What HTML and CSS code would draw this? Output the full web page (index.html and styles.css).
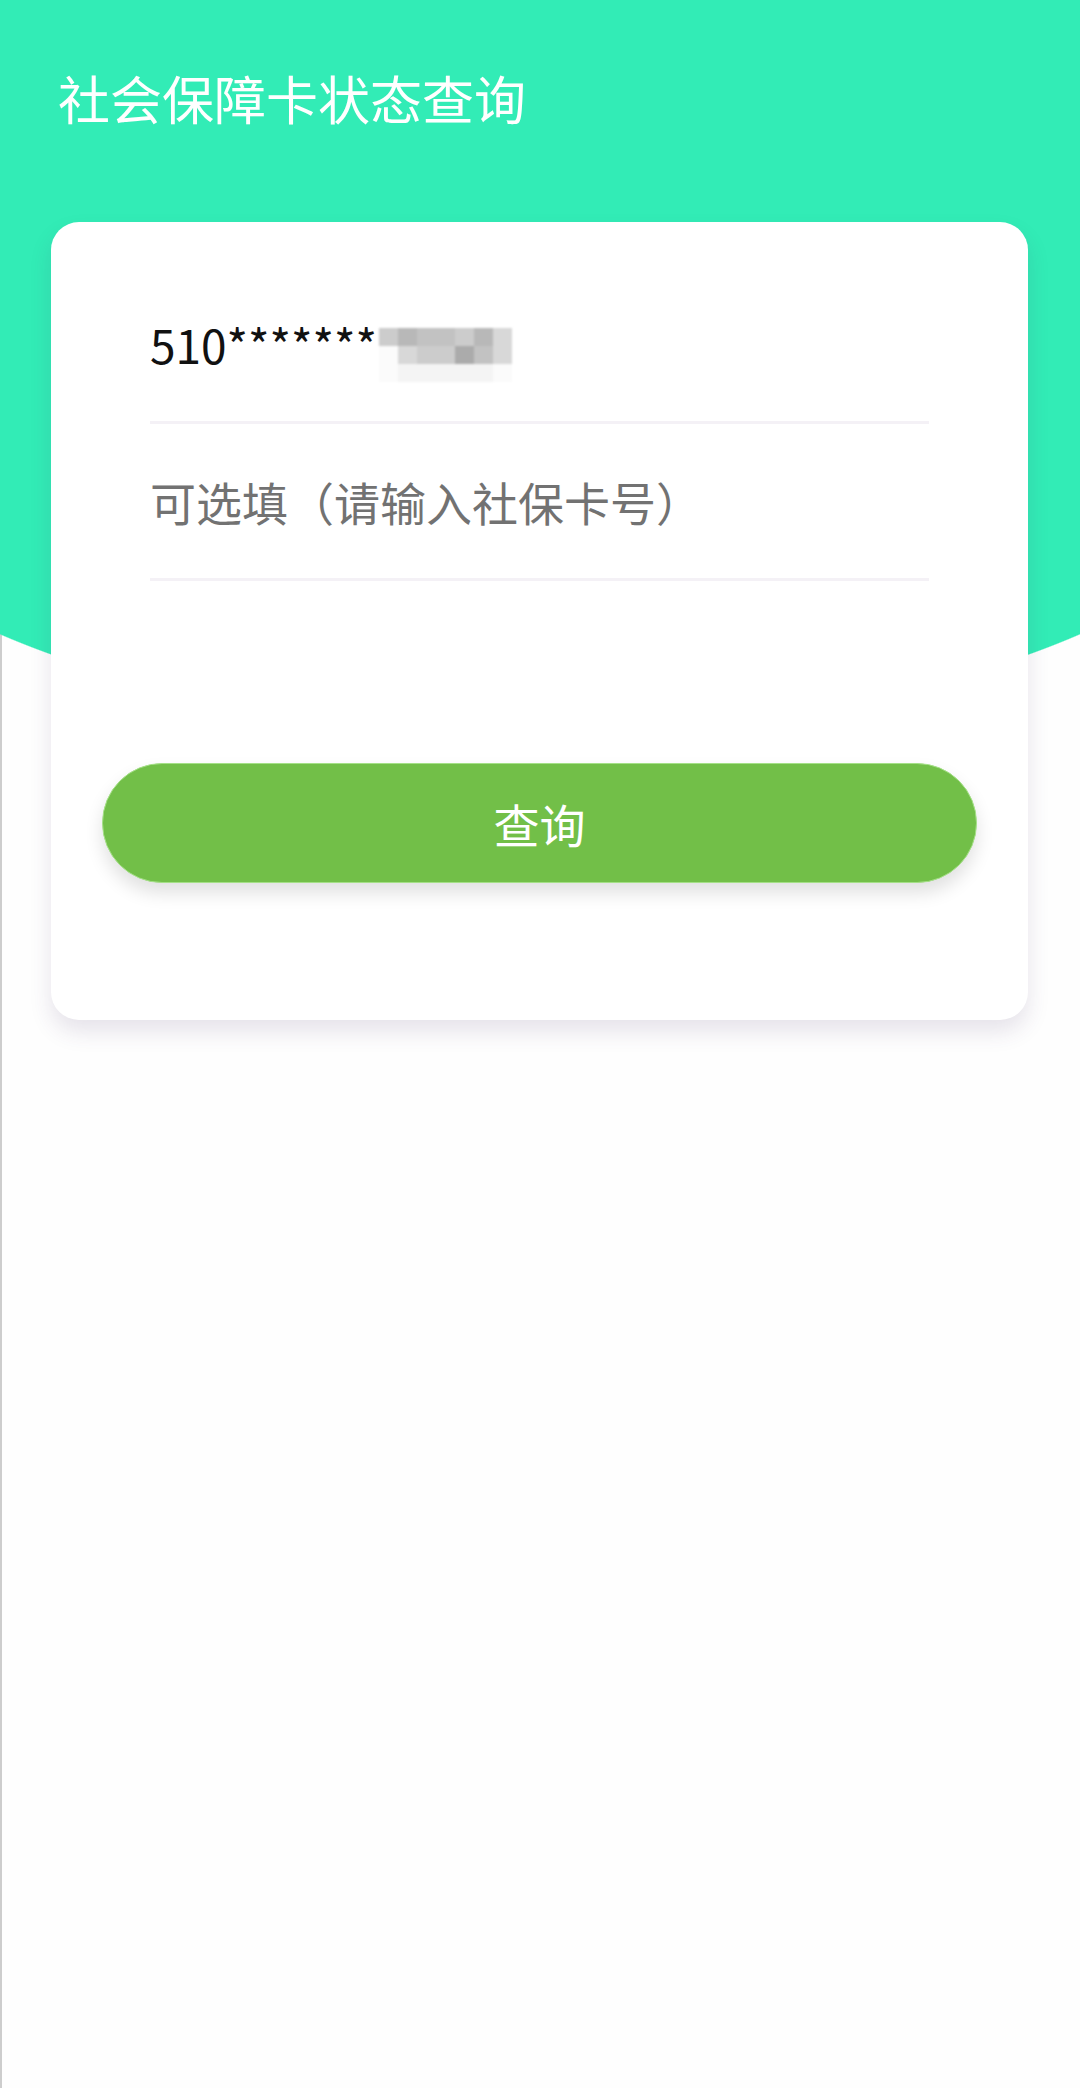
FILE: index.html
```html
<!DOCTYPE html>
<html lang="zh-CN">
<head>
    <meta charset="UTF-8">
    <title>社会保障卡状态查询</title>
    <link rel="stylesheet" href="styles.css">
</head>
<body>
    <div class="page">
        <h1 class="title">社会保障卡状态查询</h1>

        <div class="card">
            <div class="fields">
                <div class="field">
                    <span class="value">510*******</span>
                    <span class="mosaic">
                        <i class="g3"></i><i class="g5"></i><i class="g4"></i><i class="g4"></i><i class="g3"></i><i class="g5"></i><i class="g2"></i>
                        <i class="g0"></i><i class="g2"></i><i class="g3"></i><i class="g3"></i><i class="g6"></i><i class="g4"></i><i class="g2"></i>
                        <i class="g0"></i><i class="g1"></i><i class="g1"></i><i class="g1"></i><i class="g1"></i><i class="g1"></i><i class="g0"></i>
                    </span>
                </div>
                <div class="field">
                    <input class="input" type="text" placeholder="可选填（请输入社保卡号）">
                </div>
            </div>

            <button class="btn" type="button">查询</button>
        </div>
    </div>
</body>
</html>
```

FILE: styles.css
```css
body {
    margin: 0;
    font-family: "Noto Sans CJK SC", "Noto Sans", sans-serif;
    background-color: #fefefe;
}
.page {
    min-height: 2088px;
    background:
        radial-gradient(ellipse 756px 320px at 50% 411px, #32ecb6 99.7%, transparent 100%),
        linear-gradient(#32ecb6, #32ecb6) top left / 100% 412px no-repeat,
        linear-gradient(to right, #cdcdcd 2px, transparent 2px),
        #fefefe;
}
.title {
    margin: 0;
    padding: 72px 0 0 58px;
    font-size: 52px;
    line-height: 52px;
    font-weight: 400;
    color: #fff;
}
.card {
    margin: 98px 52px 0 51px;
    padding: 45px 51px 137px;
    background-color: #fff;
    border-radius: 28px;
    box-shadow: 0 12px 22px rgba(70, 50, 100, 0.13);
}
.fields {
    padding: 0 48px;
}
.field {
    display: flex;
    align-items: center;
    height: 154px;
    border-bottom: 3px solid #f4f1f6;
    font-size: 46px;
    color: #111;
}
.value {
    line-height: 1;
}
.mosaic {
    display: grid;
    grid-template-columns: repeat(7, 19px);
    grid-template-rows: repeat(3, 18px);
    align-self: flex-start;
    margin: 61px 0 0 2px;
    filter: blur(1px);
}
.mosaic i { display: block; }
.g0 { background: #fbfbfb; }
.g1 { background: #f4f4f4; }
.g2 { background: #d8d8d8; }
.g3 { background: #cccccc; }
.g4 { background: #c2c2c2; }
.g5 { background: #b8b8b8; }
.g6 { background: #ababab; }
.input {
    width: 100%;
    border: none;
    outline: none;
    padding: 0;
    background: transparent;
    font-family: inherit;
    font-size: 46px;
    color: #111;
}
.input::placeholder {
    color: #727272;
}
.btn {
    display: block;
    width: 100%;
    height: 120px;
    margin-top: 182px;
    border: 1px solid #a4e086;
    border-radius: 60px;
    background-color: #72bf48;
    box-shadow: 0 10px 18px rgba(0, 0, 0, 0.12);
    font-family: inherit;
    font-size: 46px;
    color: #fff;
}
```
